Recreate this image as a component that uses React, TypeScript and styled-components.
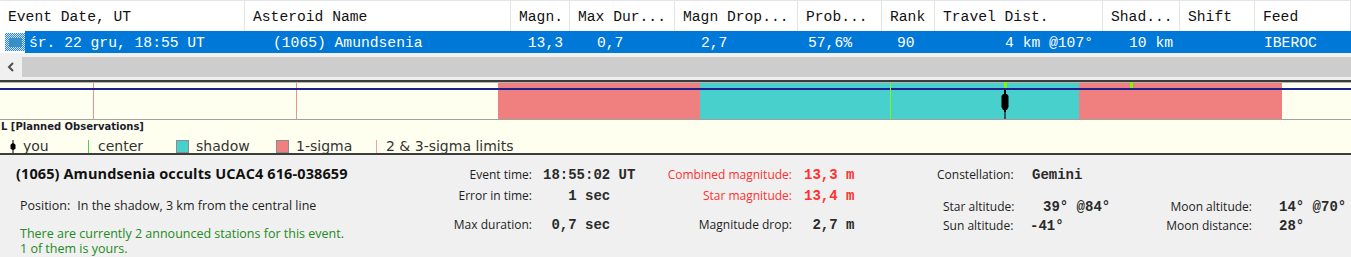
import React from "react";
import styled, { createGlobalStyle } from "styled-components";

const GlobalStyle = createGlobalStyle`
  html, body {
    margin: 0;
    padding: 0;
  }
  body {
    width: 1351px;
    height: 257px;
    overflow: hidden;
    background: #f0f0f0;
    font-family: "Open Sans", "Liberation Sans", sans-serif;
  }
`;

const mono = `"Liberation Mono", "Courier New", monospace`;

const Page = styled.div`
  display: flex;
  flex-direction: column;
  width: 1351px;
`;

/* ---------- event grid ---------- */

const HeaderRow = styled.div`
  display: flex;
  height: 30px;
  border-top: 1px solid #e4e4ec;
  background: #fff;
`;

const HeaderCell = styled.div<{ $w?: number }>`
  flex: ${({ $w }) => ($w ? `0 0 ${$w}px` : "1 1 auto")};
  box-sizing: border-box;
  display: flex;
  align-items: center;
  padding: 2px 0 0 8px;
  border-right: 1px solid #e5e5e5;
  font: 14.67px ${mono};
  color: #111;
  white-space: nowrap;
  overflow: hidden;
`;

const DataRow = styled.div`
  display: flex;
  height: 22px;
  background: #fff;
`;

const RowMark = styled.div`
  flex: 0 0 25px;
  display: flex;
  align-items: center;
  padding-left: 5px;
  box-sizing: border-box;
`;

const FocusBox = styled.div`
  width: 20px;
  height: 18px;
  box-sizing: border-box;
  display: flex;
  align-items: center;
  justify-content: center;
  background-color: #9ccaee;
  background-image: repeating-conic-gradient(#2f86d2 0 25%, #cfe6f8 0 50%);
  background-size: 2px 2px;
`;

const FocusInner = styled.div`
  width: 13px;
  height: 9px;
  background: #3a8fc4;
`;

const SelectedCells = styled.div`
  flex: 1 1 auto;
  display: flex;
  background: #0078d7;
`;

const DataCell = styled.div<{ $w?: number; $right?: boolean; $pad: number }>`
  flex: ${({ $w }) => ($w ? `0 0 ${$w}px` : "1 1 auto")};
  box-sizing: border-box;
  display: flex;
  align-items: center;
  justify-content: ${({ $right }) => ($right ? "flex-end" : "flex-start")};
  ${({ $right, $pad }) => ($right ? `padding-right: ${$pad}px;` : `padding-left: ${$pad}px;`)}
  padding-top: 1px;
  font: 14.67px ${mono};
  color: #fff;
  white-space: pre;
  overflow: hidden;
`;

const ScrollArea = styled.div`
  display: flex;
  height: 27px;
  box-sizing: border-box;
  padding: 4px 0 3px;
  background: #f0f0f0;
`;

const ScrollArrow = styled.div`
  flex: 0 0 22px;
  display: flex;
  align-items: center;
  justify-content: center;
`;

const ScrollThumb = styled.div`
  flex: 1 1 auto;
  background: #cdcdcd;
`;

/* ---------- track chart ---------- */

const ChartBox = styled.div`
  border-top: 2px solid #3c3c3c;
  border-bottom: 1px solid #a0a0a0;
  background: #fffff0;
  height: 37px;
  line-height: 0;
`;

const LegendBox = styled.div`
  height: 35px;
  box-sizing: border-box;
  background: #fffff0;
  border-bottom: 2px solid #3c3c3c;
  padding-top: 1px;
`;

const ListTitle = styled.div`
  font: bold 10px "DejaVu Sans", Verdana, sans-serif;
  line-height: 12px;
  color: #1c1c2c;
  padding-left: 1px;
`;

const LegendRow = styled.div`
  display: grid;
  grid-template-columns: 78px 88px 100px 100px auto;
  padding-left: 10px;
  margin-top: 5px;
  height: 16px;
`;

const LegendItem = styled.div`
  display: flex;
  align-items: center;
  gap: 7px;
  font: 14px "DejaVu Sans", Verdana, sans-serif;
  color: #333;
  line-height: 16px;
  white-space: nowrap;
`;

const Swatch = styled.span<{ $color: string }>`
  width: 13px;
  height: 13px;
  box-sizing: border-box;
  border: 1px solid #8c8c8c;
  background: ${({ $color }) => $color};
`;

const VLine = styled.span<{ $color: string }>`
  width: 1px;
  height: 13px;
  margin-right: 2px;
  background: ${({ $color }) => $color};
`;

/* ---------- details panel ---------- */

const InfoPanel = styled.div`
  display: grid;
  grid-template-columns: 440px 220px 270px 1fr;
  padding-top: 12px;
  font-size: 12px;
  color: #1e1e1e;
`;

const LeftInfo = styled.div`
  display: flex;
  flex-direction: column;
  padding-left: 16px;
  font-size: 12.5px;
`;

const EventTitle = styled.div`
  font-weight: 700;
  font-size: 14.5px;
  letter-spacing: 0.1px;
  line-height: 14px;
  color: #111;
`;

const PositionLine = styled.div`
  margin-top: 17px;
  padding-left: 4px;
  line-height: 16px;
  span + span {
    margin-left: 7px;
  }
`;

const StationNote = styled.div`
  margin-top: 12px;
  padding-left: 4px;
  line-height: 15px;
  color: #228b22;
`;

const FieldGrid = styled.div<{ $labelW: number; $gap: number }>`
  display: grid;
  grid-template-columns: ${({ $labelW }) => $labelW}px auto;
  grid-template-rows: 21px 29px 16px;
  column-gap: ${({ $gap }) => $gap}px;
  align-items: start;
  line-height: 16px;
`;

const Label = styled.div<{ $red?: boolean; $right?: boolean }>`
  text-align: ${({ $right }) => ($right ? "right" : "left")};
  color: ${({ $red }) => ($red ? "#ff3030" : "#1e1e1e")};
  white-space: nowrap;
`;

const Value = styled.div<{ $red?: boolean; $pad?: number }>`
  font: bold 14px ${mono};
  line-height: 16px;
  color: ${({ $red }) => ($red ? "#ff3030" : "#2a2a2a")};
  padding-left: ${({ $pad }) => $pad ?? 0}px;
  white-space: pre;
`;

const SkyInfo = styled.div`
  display: flex;
  flex-direction: column;
`;

const ConstRow = styled.div`
  display: grid;
  grid-template-columns: 95px auto;
  height: 32px;
  padding-left: 7px;
  line-height: 16px;
`;

const AltGrid = styled.div`
  display: grid;
  grid-template-columns: 87px 120px 102px auto;
  grid-template-rows: 19px 16px;
  padding-left: 13px;
  line-height: 16px;
  & > :nth-child(4n) {
    padding-left: 27px;
  }
`;

/* ---------- data ---------- */

const columns = [
  { title: "Event Date, UT", w: 245 },
  { title: "Asteroid Name", w: 266 },
  { title: "Magn.", w: 59 },
  { title: "Max Dur...", w: 105 },
  { title: "Magn Drop...", w: 123 },
  { title: "Prob...", w: 84 },
  { title: "Rank", w: 53 },
  { title: "Travel Dist.", w: 168 },
  { title: "Shad...", w: 77 },
  { title: "Shift", w: 75 },
  { title: "Feed" },
];

const rowCells = [
  { text: "śr. 22 gru, 18:55 UT", w: 220, pad: 4 },
  { text: "(1065) Amundsenia", w: 266, pad: 28 },
  { text: "13,3", w: 59, pad: 7, right: true },
  { text: "0,7", w: 105, pad: 27 },
  { text: "2,7", w: 123, pad: 26 },
  { text: "57,6%", w: 84, pad: 10 },
  { text: "90", w: 53, pad: 15 },
  { text: "4 km @107°", w: 168, pad: 10, right: true },
  { text: "10 km", w: 77, pad: 26 },
  { text: "", w: 75, pad: 0 },
  { text: "IBEROC", pad: 9 },
];

const TrackChart = () => (
  <svg width="1351" height="37" viewBox="0 0 1351 37">
    <rect x="0" y="0" width="1351" height="1" fill="#b4b4b4" />
    <rect x="498" y="1" width="202" height="36" fill="#f08080" />
    <rect x="700" y="1" width="379" height="36" fill="#48d1cc" />
    <rect x="1079" y="1" width="203" height="36" fill="#f08080" />
    <rect x="93" y="1" width="1" height="36" fill="#f19090" />
    <rect x="296" y="1" width="1" height="36" fill="#f19090" />
    <rect x="0" y="6" width="1351" height="2" fill="#1c2090" />
    <rect x="890" y="1" width="1" height="36" fill="#7cfc00" />
    <rect x="1004" y="0" width="3" height="6" fill="#7cfc00" />
    <rect x="1130" y="0" width="3" height="6" fill="#7cfc00" />
    <rect x="1004" y="8" width="2" height="22" fill="#000" />
    <rect x="1004" y="30" width="2" height="7" fill="#2a5c5a" />
    <path d="M1003 12h4l1.5 2v11l-1.5 3h-4l-1.5-3v-11z" fill="#000" />
  </svg>
);

const YouIcon = () => (
  <svg width="6" height="13" viewBox="0 0 6 13">
    <path d="M2.5 0h1v3l2 1.8v4L3.5 10v3h-1v-3L0.5 8.8v-4L2.5 3z" fill="#000" />
  </svg>
);

const ChevronLeft = () => (
  <svg width="8" height="10" viewBox="0 0 8 10">
    <path d="M6 1L2 5l4 4" fill="none" stroke="#505050" strokeWidth="2" />
  </svg>
);

const App: React.FC = () => {
  return (
    <Page>
      <GlobalStyle />
      <HeaderRow>
        {columns.map((c) => (
          <HeaderCell key={c.title} $w={c.w}>
            {c.title}
          </HeaderCell>
        ))}
      </HeaderRow>
      <DataRow>
        <RowMark>
          <FocusBox>
            <FocusInner />
          </FocusBox>
        </RowMark>
        <SelectedCells>
          {rowCells.map((c, i) => (
            <DataCell key={i} $w={c.w} $pad={c.pad} $right={c.right}>
              {c.text}
            </DataCell>
          ))}
        </SelectedCells>
      </DataRow>
      <ScrollArea>
        <ScrollArrow>
          <ChevronLeft />
        </ScrollArrow>
        <ScrollThumb />
      </ScrollArea>

      <ChartBox>
        <TrackChart />
      </ChartBox>
      <LegendBox>
        <ListTitle>L [Planned Observations]</ListTitle>
        <LegendRow>
          <LegendItem>
            <YouIcon />
            you
          </LegendItem>
          <LegendItem>
            <VLine $color="#4cd43c" />
            center
          </LegendItem>
          <LegendItem>
            <Swatch $color="#48d1cc" />
            shadow
          </LegendItem>
          <LegendItem>
            <Swatch $color="#f08080" />
            1-sigma
          </LegendItem>
          <LegendItem>
            <VLine $color="#f4a0a0" />
            2 &amp; 3-sigma limits
          </LegendItem>
        </LegendRow>
      </LegendBox>

      <InfoPanel>
        <LeftInfo>
          <EventTitle>(1065) Amundsenia occults UCAC4 616-038659</EventTitle>
          <PositionLine>
            <span>Position:</span>
            <span>In the shadow, 3 km from the central line</span>
          </PositionLine>
          <StationNote>
            There are currently 2 announced stations for this event.
            <br />1 of them is yours.
          </StationNote>
        </LeftInfo>

        <FieldGrid $labelW={92} $gap={11}>
          <Label $right>Event time:</Label>
          <Value>18:55:02 UT</Value>
          <Label $right>Error in time:</Label>
          <Value>{"   1 sec"}</Value>
          <Label $right>Max duration:</Label>
          <Value>{" 0,7 sec"}</Value>
        </FieldGrid>

        <FieldGrid $labelW={132} $gap={12}>
          <Label $right $red>
            Combined magnitude:
          </Label>
          <Value $red>13,3 m</Value>
          <Label $right $red>
            Star magnitude:
          </Label>
          <Value $red>13,4 m</Value>
          <Label $right>Magnitude drop:</Label>
          <Value>{" 2,7 m"}</Value>
        </FieldGrid>

        <SkyInfo>
          <ConstRow>
            <Label>Constellation:</Label>
            <Value>Gemini</Value>
          </ConstRow>
          <AltGrid>
            <Label>Star altitude:</Label>
            <Value $pad={13}>39° @84°</Value>
            <Label $right>Moon altitude:</Label>
            <Value>14° @70°</Value>
            <Label>Sun altitude:</Label>
            <Value>-41°</Value>
            <Label $right>Moon distance:</Label>
            <Value>28°</Value>
          </AltGrid>
        </SkyInfo>
      </InfoPanel>
    </Page>
  );
};

export default App;
